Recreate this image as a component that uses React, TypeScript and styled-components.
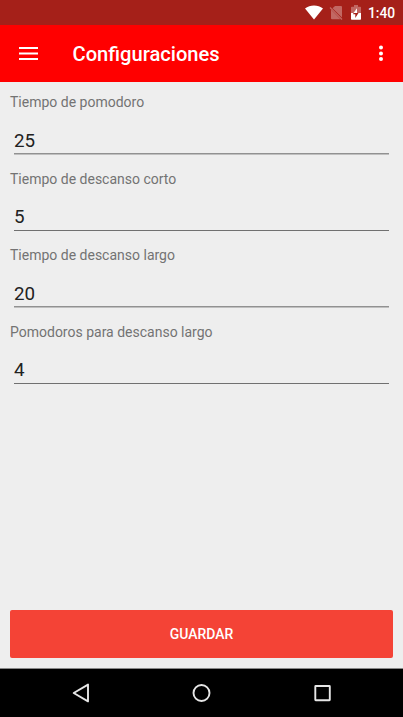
import React from 'react';
import styled, { createGlobalStyle } from 'styled-components';

const GlobalStyle = createGlobalStyle`
  *, *::before, *::after { box-sizing: border-box; }
  html, body { margin: 0; padding: 0; }
  body, input, button { font-family: Roboto, sans-serif; }
`;

const Screen = styled.div`
  display: flex;
  flex-direction: column;
  width: 403px;
  height: 717px;
  overflow: hidden;
  background: #eeeeee;
`;

const StatusBar = styled.div`
  display: flex;
  flex: none;
  align-items: center;
  justify-content: flex-end;
  height: 25px;
  padding-right: 8px;
  background: #a52019;
  color: #fff;
`;

const StatusIcons = styled.svg`
  display: block;
  width: 63px;
  height: 25px;
`;

const Clock = styled.span`
  width: 27px;
  font-size: 13.8px;
  font-weight: 500;
  line-height: 25px;
  padding-top: 1px;
  white-space: nowrap;
`;

const AppBar = styled.header`
  display: flex;
  flex: none;
  align-items: center;
  height: 57px;
  padding: 0 16px 1px 19px;
  background: #ff0000;
`;

const IconButton = styled.button<{ $width: number }>`
  display: flex;
  flex: none;
  width: ${(p) => p.$width}px;
  padding: 0;
  border: 0;
  background: none;
  svg { display: block; }
`;

const Title = styled.h1`
  flex: 1;
  margin: 0;
  padding: 2px 0 0 34.5px;
  color: #fff;
  font-size: 20.15px;
  font-weight: 500;
  line-height: 24px;
`;

const Form = styled.form`
  display: flex;
  flex: 1;
  flex-direction: column;
  padding: 10px 10px 10.5px;
`;

const Field = styled.label`
  display: block;
  height: 76.5px;
`;

const FieldName = styled.span`
  display: block;
  height: 20px;
  color: #737373;
  font-size: 14px;
  line-height: 20px;
`;

const FieldInput = styled.input<{ $raised: boolean }>`
  display: block;
  width: 375px;
  height: 32px;
  margin: 9px 0 0 4px;
  padding: ${(p) => (p.$raised ? '7px 0 1px' : '8px 0 0')};
  border: 0;
  border-radius: 0;
  outline: 0;
  background: none;
  color: #212121;
  font-size: 18.8px;
  line-height: 24px;
`;

const Underline = styled.span<{ $soft: boolean }>`
  display: block;
  width: 375px;
  height: ${(p) => (p.$soft ? 2 : 1)}px;
  margin-left: 4px;
  background: ${(p) => (p.$soft ? 'linear-gradient(#919191 50%, #bfbfbf 50%)' : '#707070')};
`;

const SaveButton = styled.button`
  width: 383px;
  height: 48px;
  margin-top: auto;
  padding: 1px 0 0;
  border: 0;
  border-radius: 2px;
  background: #f44336;
  color: #fff;
  font-size: 13.95px;
  font-weight: 500;
`;

const NavBar = styled.nav`
  display: flex;
  flex: none;
  height: 49px;
  border-top: 1px solid #888;
  background: #000;
  svg { display: block; width: 403px; height: 48px; }
`;

const fields = [
  { name: 'Tiempo de pomodoro', value: '25', soft: true },
  { name: 'Tiempo de descanso corto', value: '5', soft: false },
  { name: 'Tiempo de descanso largo', value: '20', soft: true },
  { name: 'Pomodoros para descanso largo', value: '4', soft: false },
];

export default function App() {
  return (
    <>
      <GlobalStyle />
      <Screen>
        <StatusBar>
          <StatusIcons viewBox="305 0 63 25">
            <path d="M305 8.5C310 4.4 318 4.4 323 8.5L314 19.6Z" fill="#fff" />
            <g opacity="0.32">
              <path d="M335 6h6q1 0 1 1v10.5L332.5 8.3Z" fill="#fff" />
              <path d="M331 9.5L340.5 19.2H332q-1 0-1-1Z" fill="#fff" />
              <path d="M330 7.5L342 19.5" stroke="#fff" strokeWidth="1.2" />
            </g>
            <path d="M351 7.5q0-.8.8-.8h2.2V5h4v1.7h2.2q.8 0 .8.8V13H351Z" fill="#fff" opacity="0.32" />
            <path d="M351 13h10v6q0 .8-.8.8h-8.4q-.8 0-.8-.8Z" fill="#fff" />
            <path d="M357 8.3V13h-3.5Z" fill="#fff" />
            <path d="M353.5 13h5l-3.2 5v-3.7h-2.2Z" fill="#a52019" />
          </StatusIcons>
          <Clock>1:40</Clock>
        </StatusBar>
        <AppBar>
          <IconButton $width={19} aria-label="Menú">
            <svg width="19" height="14" viewBox="0 0 19 14" fill="#fff">
              <path d="M0 1h19v2H0zM0 12h19v2H0z" />
              <path d="M0 6h19v1H0zM0 8h19v1H0z" opacity=".5" />
              <path d="M0 7h19v1H0z" />
            </svg>
          </IconButton>
          <Title>Configuraciones</Title>
          <IconButton $width={12} aria-label="Más opciones">
            <svg width="12" height="16" viewBox="0 0 12 16" fill="#fff">
              <circle cx="6" cy="2.4" r="2" />
              <circle cx="6" cy="8.4" r="2" />
              <circle cx="6" cy="14" r="2" />
            </svg>
          </IconButton>
        </AppBar>
        <Form onSubmit={(e) => e.preventDefault()}>
          {fields.map((f) => (
            <Field key={f.name}>
              <FieldName>{f.name}</FieldName>
              <FieldInput defaultValue={f.value} inputMode="numeric" $raised={!f.soft} />
              <Underline $soft={f.soft} />
            </Field>
          ))}
          <SaveButton type="submit">GUARDAR</SaveButton>
        </Form>
        <NavBar>
          <svg viewBox="0 0 403 48" fill="none" stroke="#e6e6e6" strokeWidth="1.9">
            <path d="M88 15.6V32.4L73.7 24Z" strokeLinejoin="round" />
            <circle cx="201.5" cy="24" r="8" />
            <rect x="315.3" y="17" width="14.5" height="14.2" rx=".4" />
          </svg>
        </NavBar>
      </Screen>
    </>
  );
}
